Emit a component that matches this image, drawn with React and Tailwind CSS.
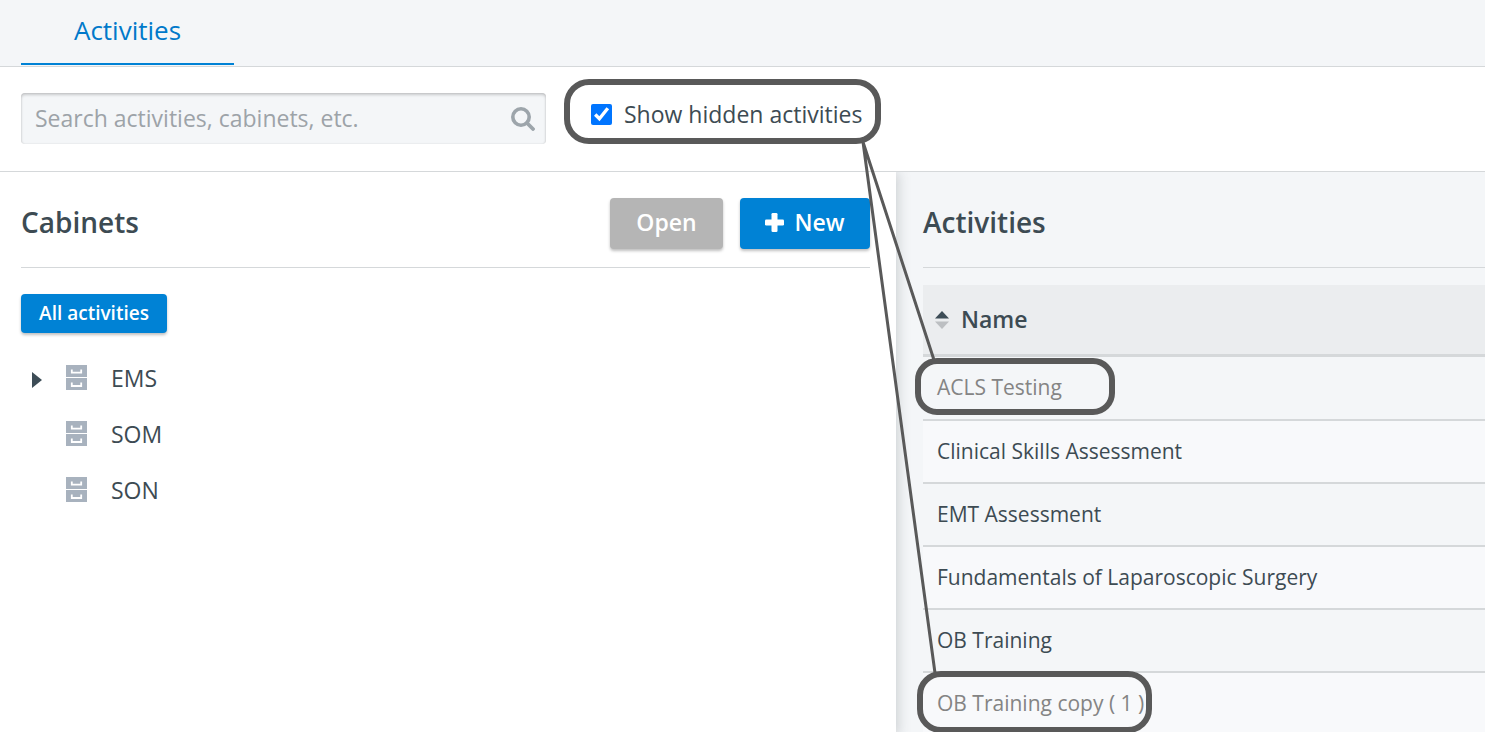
import React, { useState } from 'react';

const cabinets = [
    { id: 'ems', name: 'EMS', expandable: true },
    { id: 'som', name: 'SOM' },
    { id: 'son', name: 'SON' },
];

const activities = [
    { name: 'ACLS Testing', hidden: true },
    { name: 'Clinical Skills Assessment' },
    { name: 'EMT Assessment' },
    { name: 'Fundamentals of Laparoscopic Surgery' },
    { name: 'OB Training' },
    { name: 'OB Training copy ( 1 )', hidden: true },
];

const CabinetIcon = () => (
    <svg width="22" height="26" viewBox="0 0 22 26" className="shrink-0" aria-hidden="true">
        <path d="M0 0h21v12H0zM0 13h21v12H0z" fill="#a8b2be" />
        <path d="M5.8 4.5v3.2h9.400V4.500M5.800 17.500v3.500h9.400v-3.500" fill="none" stroke="#fff" strokeWidth="1.8" />
    </svg>
);

const SearchIcon = () => (
    <svg
        width="24"
        height="24"
        viewBox="0 0 24 24"
        fill="none"
        stroke="#9da5ab"
        className="absolute right-[11px] top-[14px]"
        aria-hidden="true"
    >
        <circle cx="10" cy="10" r="8.2" strokeWidth="3.6" />
        <path d="M16 16l6 6" strokeWidth="3.8" strokeLinecap="round" />
    </svg>
);

const PlusIcon = () => (
    <svg width="19" height="19" viewBox="0 0 19 19" fill="currentColor" aria-hidden="true">
        <rect x="6.500" width="6" height="19" rx="1.300" />
        <rect y="6.500" width="19" height="6" rx="1.300" />
    </svg>
);

const SortIcon = () => (
    <svg width="14" height="18" viewBox="0 0 14 18" aria-hidden="true">
        <path d="M0 7.5 7 0l7 7.5z" fill="#3d4d57" />
        <path d="M0 10.5h14L7 18z" fill="#bcbfc2" />
    </svg>
);

// Callout outlines and the lines that join them
const Callouts = () => (
    <svg className="absolute top-0 left-0 pointer-events-none" width="1485" height="732" fill="none" stroke="#595959" aria-hidden="true">
        <path d="M863 142 934 360M863 142 935 673" strokeWidth="3" />
        <g strokeWidth="6">
            <rect x="567" y="82" width="311" height="59" rx="22" />
            <rect x="918" y="361" width="194" height="51" rx="19" />
            <rect x="920" y="674" width="229" height="56" rx="21" />
        </g>
    </svg>
);

const App = () => {
    const [showHidden, setShowHidden] = useState(true);
    const [query, setQuery] = useState('');

    const rows = activities.filter((a) => showHidden || !a.hidden);

    return (
        <div className="relative flex flex-col h-screen overflow-hidden bg-white text-[#3d4b53] font-['Open_Sans',sans-serif]">
            {/* Tabs */}
            <nav className="shrink-0 h-[67px] px-[21px] bg-[#f4f6f8] border-b border-[#d5d8da]">
                <a
                    href="#activities"
                    className="flex items-center justify-center w-[213px] h-[65px] pb-[2px] border-b-2 border-[#0082d5] text-[26px] text-[#0079ca]"
                >
                    Activities
                </a>
            </nav>

            {/* Search bar */}
            <div className="shrink-0 flex items-start h-[105px] px-[21px] pt-[26px] border-b border-[#d5d8da]">
                <div className="relative w-[525px]">
                    <input
                        type="text"
                        aria-label="Search"
                        value={query}
                        onChange={(e) => setQuery(e.target.value)}
                        placeholder="Search activities, cabinets, etc."
                        className="w-full h-[51px] pl-[14px] pr-12 pb-[2px] rounded bg-[#f4f6f8] text-[23px] placeholder:text-[#9da3a8] shadow-[inset_0_2px_3px_rgba(0,0,0,0.18),inset_0_0_2px_rgba(0,0,0,0.12)] outline-none"
                    />
                    <SearchIcon />
                </div>
                <label className="flex items-center gap-3 h-[42px] ml-[45px] text-[23px]">
                    <input
                        type="checkbox"
                        checked={showHidden}
                        onChange={(e) => setShowHidden(e.target.checked)}
                        className="w-[21px] h-[21px] accent-[#0075ff]"
                    />
                    Show hidden activities
                </label>
            </div>

            <main className="grow grid grid-cols-[896fr_589fr] min-h-0">
                {/* Cabinets */}
                <section className="relative pl-[21px] pr-[26px] bg-white shadow-[2px_0_12px_rgba(60,70,75,0.22)] [clip-path:inset(0_-20px_0_0)]">
                    <header className="flex items-center justify-between h-24 pt-[7px] border-b border-[#d5d8da]">
                        <h2 className="pb-[2px] text-[28px] font-semibold">Cabinets</h2>
                        <div className="flex gap-[17px] text-[23px] font-semibold text-white">
                            <button className="w-[113px] h-[51px] pb-[2px] rounded bg-[#b5b5b5] shadow-[0_2px_3px_rgba(0,0,0,0.25)]">
                                Open
                            </button>
                            <button className="flex items-center justify-center gap-[10px] w-[130px] h-[51px] pb-[2px] rounded bg-[#0082d5] shadow-[0_2px_3px_rgba(0,0,0,0.25)]">
                                <PlusIcon />
                                New
                            </button>
                        </div>
                    </header>
                    <button className="mt-[26px] w-[146px] h-[39px] rounded bg-[#0082d5] text-[19px] font-semibold text-white shadow-[0_2px_3px_rgba(0,0,0,0.25)]">
                        All activities
                    </button>
                    <ul className="mt-[17px]">
                        {cabinets.map((cabinet) => (
                            <li key={cabinet.id} className="flex items-center h-14 text-[23px]">
                                <span className="flex w-[45px] pl-[11px] pt-[3px]">
                                    {cabinet.expandable && (
                                        <svg width="10" height="16" viewBox="0 0 10 16" aria-hidden="true">
                                            <path d="M0 0 10 8 0 16z" fill="#3d4d57" />
                                        </svg>
                                    )}
                                </span>
                                <CabinetIcon />
                                <span className="ml-[23px]">{cabinet.name}</span>
                            </li>
                        ))}
                    </ul>
                </section>

                {/* Activities */}
                <section className="pl-[27px] bg-[#f4f6f8]">
                    <header className="flex items-center h-24 pt-[7px] border-b border-[#d5d8da]">
                        <h2 className="pb-[2px] text-[28px] font-semibold">Activities</h2>
                    </header>
                    <table className="w-full mt-[17px] border-separate border-spacing-0 text-left">
                        <thead>
                            <tr>
                                <th className="h-[72px] px-3 bg-[#ebedef] border-b-[3px] border-[#d5d8da] font-semibold">
                                    <button className="flex items-center gap-3 text-[23px]">
                                        <SortIcon />
                                        Name
                                    </button>
                                </th>
                            </tr>
                        </thead>
                        <tbody>
                            {rows.map((activity) => (
                                <tr key={activity.name} className="group even:bg-[#f8f9fb]">
                                    <td
                                        className={`h-[63px] group-first:h-16 px-[14px] border-b-2 border-[#d5d8da] text-[21px] ${activity.hidden ? 'text-[#848484]' : ''}`}
                                    >
                                        {activity.name}
                                    </td>
                                </tr>
                            ))}
                        </tbody>
                    </table>
                </section>
            </main>

            <Callouts />
        </div>
    );
};

export default App;
